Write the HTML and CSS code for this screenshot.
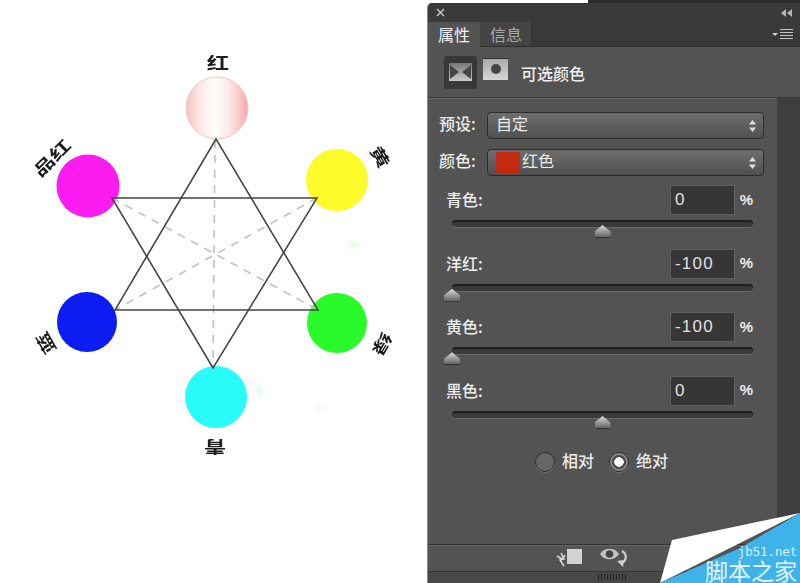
FILE: index.html
```html
<!DOCTYPE html>
<html lang="zh-CN">
<head>
    <meta charset="UTF-8">
    <meta name="viewport" content="width=device-width, initial-scale=1.0">
    <title>可选颜色</title>
    <link rel="stylesheet" href="styles.css">
</head>
<body>
    <div class="page">
        <!-- 色轮 -->
        <svg class="wheel" width="427" height="583" viewBox="0 0 427 583">
            <defs>
                <linearGradient id="redBall" x1="0" x2="1" y1="0" y2="0">
                    <stop offset="0" stop-color="#f7c4c4"/>
                    <stop offset="0.25" stop-color="#fde9e9"/>
                    <stop offset="0.45" stop-color="#ffffff"/>
                    <stop offset="0.7" stop-color="#fde8e8"/>
                    <stop offset="1" stop-color="#f4a9a9"/>
                </linearGradient>
                <filter id="soft"><feGaussianBlur stdDeviation="0.5"/></filter>
                <filter id="smudge"><feGaussianBlur stdDeviation="2"/></filter>
                <filter id="inkBlur"><feGaussianBlur stdDeviation="0.3"/></filter>
            </defs>
            <g filter="url(#smudge)" opacity="0.5">
                <ellipse cx="354" cy="245" rx="6" ry="3" fill="#c8f5c0"/>
                <ellipse cx="259" cy="390" rx="2" ry="9" fill="#b5f2d4" transform="rotate(-30 259 390)"/>
                <ellipse cx="322" cy="408" rx="7" ry="3" fill="#e6f2e6"/>
            </g>
            <g filter="url(#soft)">
                <circle cx="217" cy="108" r="31" fill="url(#redBall)" stroke="#f2c4c4"/>
                <circle cx="88" cy="186" r="31.5" fill="#fa1cf0"/>
                <circle cx="337" cy="180" r="31" fill="#fdfb2a"/>
                <circle cx="87" cy="322" r="30" fill="#0c1cf0"/>
                <circle cx="337" cy="323" r="30" fill="#2afa2a"/>
                <circle cx="216" cy="397" r="31" fill="#2afbfb"/>
            </g>
            <g class="dashes">
                <line x1="215" y1="140" x2="213" y2="368"/>
                <line x1="112" y1="198" x2="318" y2="310"/>
                <line x1="317" y1="198" x2="115" y2="310"/>
            </g>
            <g class="star">
                <polygon points="216,139 115,310 318,310"/>
                <polygon points="213,368 112,198 317,198"/>
            </g>
            <g class="hue" filter="url(#inkBlur)">
                <text transform="translate(218 63) scale(1.4 1)" y="6">红</text>
                <text transform="translate(52 158) rotate(-45) scale(1.4 1)" y="6">品红</text>
                <text transform="translate(380 157) rotate(60) scale(1.4 1)" y="6">黄</text>
                <text transform="translate(382 344) rotate(120) scale(1.4 1)" y="6">绿</text>
                <text transform="translate(215 447) rotate(180) scale(1.4 1)" y="6">青</text>
                <text transform="translate(46 343) rotate(240) scale(1.4 1)" y="6">蓝</text>
            </g>
        </svg>

        <div class="side">
            <div class="top-edge"><span class="top-edge-light"></span></div>
            <div class="panel">
                <div class="title-bar">
                    <svg width="9" height="9" viewBox="0 0 9 9"><path d="M1 1l7 7M8 1l-7 7" stroke="#cfcfcf" stroke-width="1.3"/></svg>
                    <svg width="11" height="8" viewBox="0 0 11 8"><path d="M5 0v8L0 4zM11 0v8L6 4z" fill="#b5b5b5"/></svg>
                </div>
                <div class="tab-bar">
                    <div class="tab active">属性</div>
                    <div class="tab">信息</div>
                    <svg class="tab-menu" width="21" height="12" viewBox="0 0 21 12">
                        <path d="M0 4h6L3 7z" fill="#d0d0d0"/>
                        <path d="M8 .5h13M8 3.5h13M8 6.5h13M8 9.5h13" stroke="#c4c4c4"/>
                    </svg>
                </div>
                <div class="head">
                    <div class="head-btn">
                        <svg width="23" height="18" viewBox="0 0 23 18">
                            <defs>
                                <linearGradient id="maskFill" x1="0" x2="0" y1="0" y2="1">
                                    <stop offset="0" stop-color="#777"/>
                                    <stop offset="1" stop-color="#cbcbcb"/>
                                </linearGradient>
                            </defs>
                            <rect width="23" height="18" fill="url(#maskFill)"/>
                            <path d="M1 2l9 7-9 7zM22 2l-9 7 9 7z" fill="#454545"/>
                        </svg>
                    </div>
                    <div class="mask-btn"><span class="mask-dot"></span></div>
                    <div class="head-title">可选颜色</div>
                </div>

                <div class="body">
                    <div class="form">
                        <div class="pick-row">
                            <label class="pick-label">预设:</label>
                            <div class="select">
                                <span class="select-text">自定</span>
                                <svg class="updown" width="7" height="12" viewBox="0 0 7 12"><path d="M3.5 0L7 4.5H0zM3.5 12L0 7.5h7z" fill="#e0e0e0"/></svg>
                            </div>
                        </div>
                        <div class="pick-row">
                            <label class="pick-label">颜色:</label>
                            <div class="select">
                                <span class="swatch"></span>
                                <span class="select-text swatch-name">红色</span>
                                <svg class="updown" width="7" height="12" viewBox="0 0 7 12"><path d="M3.5 0L7 4.5H0zM3.5 12L0 7.5h7z" fill="#e0e0e0"/></svg>
                            </div>
                        </div>

                        <div class="inks">
                            <div class="ink">
                                <div class="ink-top">
                                    <label class="ink-label">青色:</label>
                                    <div class="ink-value">0</div>
                                    <span class="ink-unit">%</span>
                                </div>
                                <div class="track"><span class="thumb" style="left: 50%"></span></div>
                            </div>
                            <div class="ink">
                                <div class="ink-top">
                                    <label class="ink-label">洋红:</label>
                                    <div class="ink-value">-100</div>
                                    <span class="ink-unit">%</span>
                                </div>
                                <div class="track"><span class="thumb" style="left: 0%"></span></div>
                            </div>
                            <div class="ink">
                                <div class="ink-top">
                                    <label class="ink-label">黄色:</label>
                                    <div class="ink-value">-100</div>
                                    <span class="ink-unit">%</span>
                                </div>
                                <div class="track"><span class="thumb" style="left: 0%"></span></div>
                            </div>
                            <div class="ink">
                                <div class="ink-top">
                                    <label class="ink-label">黑色:</label>
                                    <div class="ink-value">0</div>
                                    <span class="ink-unit">%</span>
                                </div>
                                <div class="track"><span class="thumb" style="left: 50%"></span></div>
                            </div>
                        </div>

                        <div class="modes">
                            <span class="radio"></span>
                            <span class="mode-name">相对</span>
                            <span class="radio on"></span>
                            <span class="mode-name">绝对</span>
                        </div>
                    </div>
                    <div class="scroll-col"></div>
                </div>

                <div class="foot">
                    <svg width="27" height="20" viewBox="0 0 27 20">
                        <rect x="11" y="1" width="15" height="15" fill="#d2d2d2"/>
                        <path d="M1 8l5 3M5 5l3 6-4 1 4 6M9 7l-3 5" stroke="#d8d8d8" stroke-width="1.6" fill="none"/>
                    </svg>
                    <svg class="eye" width="28" height="20" viewBox="0 0 28 20">
                        <path d="M0 6c4-7 15-7 19 0-4 7-15 7-19 0z" fill="#c4c4c4"/>
                        <circle cx="9.5" cy="6" r="3.8" fill="#454545"/>
                        <path d="M22 3c5 3 5 9 0 12" stroke="#d0d0d0" stroke-width="2.2" fill="none"/>
                        <path d="M17 13l7-1-1 7z" fill="#d0d0d0"/>
                    </svg>
                </div>
                <div class="grip"><span class="grip-dots"></span></div>
            </div>
        </div>

        <!-- 水印 -->
        <div class="stamp">
            <svg class="stamp-bg" width="140" height="70" viewBox="0 0 140 70">
                <polygon points="12,27 140,0 0,70" fill="#ffffff"/>
                <polygon points="140,0 78,36 0,70 140,70" fill="#3fb3e8"/>
            </svg>
            <div class="stamp-url">jb51.net</div>
            <div class="stamp-name">脚本之家</div>
        </div>
    </div>
</body>
</html>
```

FILE: styles.css
```css
html, body {
    margin: 0;
    padding: 0;
    background: #fff;
}
.page {
    position: relative;
    display: flex;
    width: 800px;
    height: 583px;
    overflow: hidden;
    font-family: "Noto Sans CJK SC", "Liberation Sans", sans-serif;
}
.wheel {
    display: block;
    flex: none;
}
.star polygon {
    fill: none;
    stroke: #444;
    stroke-width: 1.5;
}
.dashes line {
    stroke: #c0c0c0;
    stroke-width: 1.6;
    stroke-dasharray: 8 7;
}
.hue text {
    font-size: 16px;
    font-weight: 700;
    fill: #1a1a1a;
    text-anchor: middle;
}

.side {
    flex: 1;
    display: flex;
    flex-direction: column;
    min-width: 0;
}
.top-edge {
    height: 3px;
    background: #2b2b2b;
    flex: none;
}
.top-edge-light {
    display: block;
    width: 161px;
    height: 3px;
    background: #fff;
}
.panel {
    flex: 1;
    display: flex;
    flex-direction: column;
    background: #535353;
    border-left: 1px solid #8a8a8a;
    border-radius: 5px 0 0 0;
    overflow: hidden;
    color: #ececec;
}
.title-bar {
    height: 19px;
    flex: none;
    display: flex;
    align-items: center;
    justify-content: space-between;
    padding: 0 8px;
    background: #3a3a3a;
}
.tab-bar {
    height: 25px;
    flex: none;
    display: flex;
    align-items: stretch;
    background: #393939;
    border-bottom: 1px solid #2e2e2e;
    box-sizing: border-box;
}
.tab {
    width: 52px;
    box-sizing: border-box;
    padding-left: 10px;
    font-size: 16px;
    line-height: 25px;
    color: #a8a8a8;
    background: #444;
    border-right: 1px solid #333;
}
.tab.active {
    color: #f0f0f0;
    background: #535353;
    border-right: none;
    margin-bottom: -1px;
}
.tab-menu {
    margin: 7px 7px 0 auto;
}
.head {
    height: 51px;
    flex: none;
    display: flex;
    align-items: center;
    box-sizing: border-box;
    padding-left: 16px;
    border-bottom: 1px solid #3a3a3a;
    box-shadow: 0 1px 0 #666;
}
.head-btn {
    width: 33px;
    height: 33px;
    display: flex;
    align-items: center;
    justify-content: center;
    background: #383838;
    border-radius: 3px;
}
.head-btn svg {
    display: block;
}
.mask-btn {
    width: 25px;
    height: 21px;
    margin: 0 0 7px 6px;
    display: flex;
    align-items: center;
    justify-content: center;
    background: linear-gradient(#a8a8a8, #d8d8d8);
    border-top: 1px solid #2e2e2e;
}
.mask-dot {
    width: 10px;
    height: 10px;
    border-radius: 50%;
    background: #444;
}
.head-title {
    margin-left: 13px;
    padding-top: 1px;
    font-size: 16px;
    font-weight: 500;
    color: #f0f0f0;
}

.body {
    flex: 1;
    display: flex;
    min-height: 0;
}
.form {
    flex: 1;
    min-width: 0;
    padding-top: 14px;
}
.scroll-col {
    width: 23px;
    flex: none;
    background: #3e3e3e;
}
.pick-row {
    display: flex;
    align-items: center;
    height: 27px;
    margin-bottom: 10px;
    padding: 0 13px 0 11px;
}
.pick-label {
    width: 48px;
    flex: none;
    padding-bottom: 6px;
    font-size: 16px;
    font-weight: 500;
}
.select {
    flex: 1;
    display: flex;
    align-items: center;
    height: 27px;
    box-sizing: border-box;
    padding: 0 7px 0 8px;
    font-size: 16px;
    border: 1px solid #2c2c2c;
    border-radius: 4px;
    background: linear-gradient(#6e6e6e, #505050);
}
.select-text {
    padding-bottom: 6px;
}
.swatch {
    width: 24px;
    height: 21px;
    background: #c42a10;
    border-radius: 2px;
}
.swatch-name {
    margin-left: 2px;
}
.updown {
    margin-left: auto;
}
.inks {
    margin-top: -1px;
}
.ink {
    height: 63.67px;
    padding: 0 24px 0 18px;
    box-sizing: border-box;
}
.ink-top {
    display: flex;
    align-items: center;
    height: 30px;
}
.ink-label {
    flex: 1;
    padding-bottom: 2px;
    font-size: 16px;
    font-weight: 500;
}
.ink-value {
    width: 65px;
    height: 30px;
    box-sizing: border-box;
    padding-left: 4px;
    line-height: 28px;
    font-family: "Liberation Sans", sans-serif;
    font-size: 17px;
    letter-spacing: 1.2px;
    color: #e0e0e0;
    background: #363636;
    border: 1px solid #5f5f5f;
}
.ink-unit {
    width: 18px;
    padding-bottom: 2px;
    text-align: right;
    font-family: "Liberation Sans", sans-serif;
    font-size: 15px;
    font-weight: 700;
}
.track {
    position: relative;
    height: 7px;
    margin: 5px 0 0 6px;
    background: #3a3a3a;
    border-radius: 4px;
    box-shadow: inset 0 2px 1px #1f1f1f, 0 1px 0 #6a6a6a;
}
.thumb {
    position: absolute;
    top: 5px;
    width: 16px;
    height: 13px;
    margin-left: -8px;
    background: linear-gradient(#dcdcdc, #9a9a9a 50%, #666 90%, #2e2e2e 90%);
    clip-path: polygon(50% 0, 100% 50%, 100% 90%, 90% 100%, 10% 100%, 0 90%, 0 50%);
}
.modes {
    display: flex;
    align-items: center;
    height: 20px;
    margin-top: 12px;
    padding-left: 107px;
    font-size: 16px;
    font-weight: 500;
}
.radio {
    flex: none;
    width: 18px;
    height: 18px;
    border: 1px solid #2c2c2c;
    border-radius: 50%;
    background: #666;
    box-shadow: 0 1px 0 #777;
}
.radio.on {
    background: radial-gradient(circle, #fff 0 4.5px, #4a4a4a 5px 6.5px, #888 7.5px);
}
.mode-name {
    margin: 0 15px 0 7px;
    padding-bottom: 4px;
}

.foot {
    height: 28px;
    flex: none;
    display: flex;
    align-items: center;
    gap: 17px;
    box-sizing: border-box;
    padding-left: 128px;
    border-top: 1px solid #333;
    border-bottom: 1px solid #333;
    box-shadow: inset 0 1px 0 #666;
}
.grip {
    height: 11px;
    flex: none;
    background: #484848;
}
.grip-dots {
    display: block;
    width: 30px;
    height: 6px;
    margin: 2px 0 0 170px;
    background: repeating-linear-gradient(90deg, #222 0 1px, transparent 1px 3px);
}

.stamp {
    position: absolute;
    right: 0;
    bottom: 0;
    width: 140px;
    height: 70px;
}
.stamp-bg {
    position: absolute;
    left: 0;
    top: 0;
    display: block;
}
.stamp-url {
    position: absolute;
    right: 3px;
    top: 32px;
    font-family: "DejaVu Sans Mono", monospace;
    font-size: 13px;
    line-height: 13px;
    letter-spacing: -0.4px;
    color: #d4eefb;
}
.stamp-name {
    position: absolute;
    right: 3px;
    top: 46px;
    font-size: 23px;
    line-height: 23px;
    color: #e6f6fd;
    white-space: nowrap;
}
```
